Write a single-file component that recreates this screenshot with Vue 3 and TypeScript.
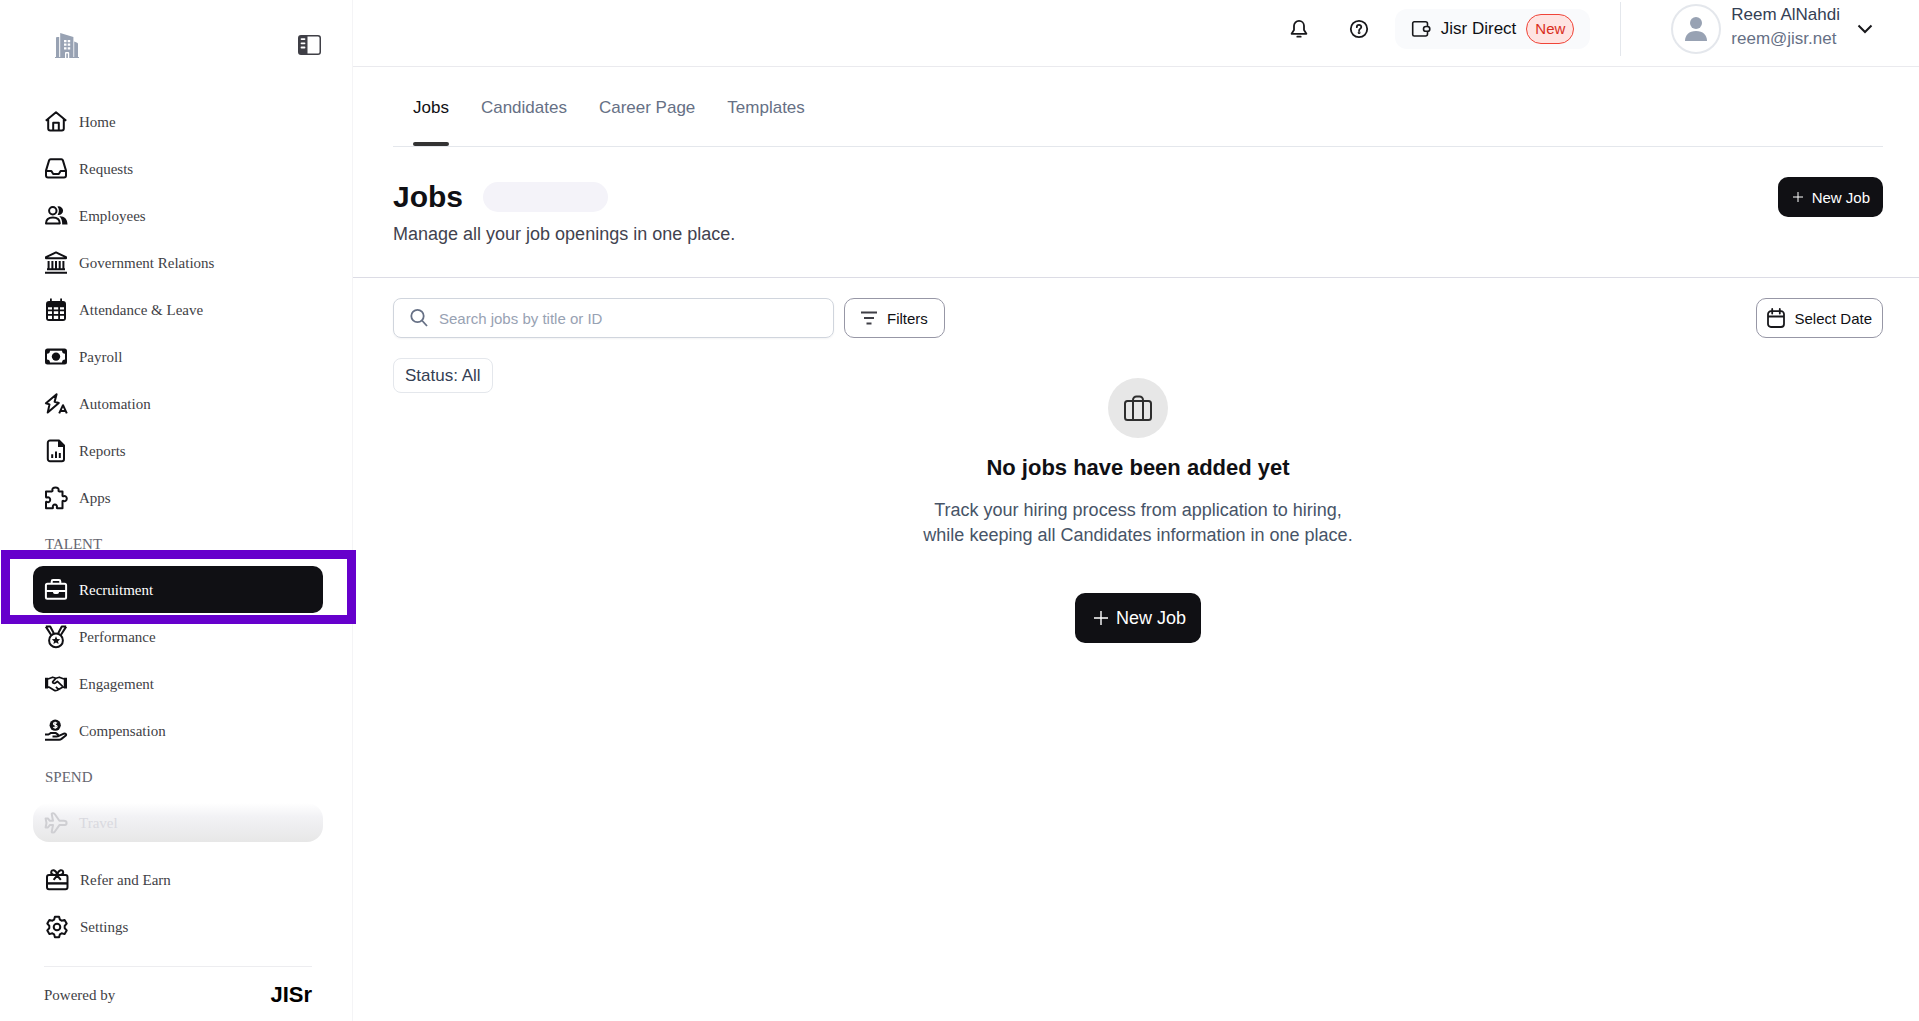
<script setup lang="ts">
import { ref } from 'vue'

interface NavItem {
  label: string
  icon: string
}

const icons: Record<string, string> = {
  home: '<path d="M1.8 10.8 12 2.2l10.2 8.6M4.2 9v9.5a2 2 0 0 0 2 2h11.6a2 2 0 0 0 2-2V9M9.2 20.3v-7.5h5.6v7.5"/>',
  requests:
    '<path d="M6.6 2.3h10.8a1.6 1.6 0 0 1 1.5 1.1L22 13.6v5a2 2 0 0 1-2 2H4a2 2 0 0 1-2-2v-5L5.1 3.4a1.6 1.6 0 0 1 1.5-1.1zM2 14h5.4l1.8 3h5.6l1.8-3H22"/>',
  employees:
    '<circle cx="8.8" cy="6.7" r="3.7"/><path d="M2 19.4c.1-3.8 2.8-5.8 6.9-5.8s6.8 2 6.9 5.8z"/><path fill="currentColor" stroke="none" d="M13.4 2.6a4.3 4.3 0 1 1 .2 8.2c1.8-2.5 1.8-5.700-.2-8.200zM15.300 12.300c4.700-.4 8.100 2.400 8.200 8.100h-5.300c.1-3.400-.8-6.200-2.900-8.100z"/>',
  bank: '<path d="M12 1.400 22 6.200v1H2v-1z"/><path d="M4.600 10v8.500M8.400 10v8.500M12 10v8.500M15.700 10v8.500M19.400 10v8.500M3 18.300h18M1 21.800h22"/>',
  calendar:
    '<path fill="currentColor" stroke="none" fill-rule="evenodd" d="M6 .5h1.800V3h8.400V.5H18V3h1a3 3 0 0 1 3 3v14a3 3 0 0 1-3 3H5a3 3 0 0 1-3-3V6a3 3 0 0 1 3-3h1zM4 9.200v2.300h4V9.200zm5.800 0v2.300h4.400V9.200zm6.200 0v2.300h4V9.200zM4 13.300v2.700h4v-2.700zm5.800 0v2.700h4.400v-2.700zm6.200 0v2.700h4v-2.700zM4 17.800V21h4v-3.200zm5.800 0V21h4.400v-3.200zm6.200 0V21h4v-3.200z"/>',
  cash: '<path fill="currentColor" stroke="none" fill-rule="evenodd" d="M3.500 3.600h17A2.500 2.500 0 0 1 23 6.100v11a2.500 2.500 0 0 1-2.500 2.500h-17A2.500 2.500 0 0 1 1 17.100v-11a2.500 2.500 0 0 1 2.500-2.500zM6 5.800a3 3 0 0 1-3 2.900v5.800a3 3 0 0 1 3 2.900h12a3 3 0 0 1 3-2.900V8.700a3 3 0 0 1-3-2.900z"/><circle cx="12" cy="11.600" r="4.200" fill="currentColor" stroke="none"/>',
  automation:
    '<path d="M12.600 2.200 1.900 11.200l3.600 1.200-1.800 8.200L14.800 11l-4.200-1.200z"/><path d="M15.200 21.300 19 13.200l3.800 8.100M16.600 19h4.800"/>',
  reports:
    '<path d="M6 1.500h9l5 5V20a2.200 2.200 0 0 1-2.200 2.200H6A2.200 2.200 0 0 1 3.800 20V3.700A2.200 2.200 0 0 1 6 1.500zM8.200 19v-3.800M12 19v-6.600M15.800 19v-5"/><path fill="currentColor" stroke="none" d="M14 1v7h6.500z"/>',
  apps: '<path d="M2.300 4.800h5.600c.5 0 .8-.5.6-1C7.700 1.800 9.500.9 11.500.9s3.700 1 3 2.900c-.2.500.1 1 .6 1h3.400v4.300c0 .5.500.8 1 .6 1.700-.8 3.300.6 3.300 2.300s-1.600 3.100-3.300 2.300c-.5-.2-1 .1-1 .6v6.800h-5.200c-.5 0-.5-.5-.4-1 .4-1.800-.6-2.700-2-2.700s-2.400.9-2 2.700c.1.500.1 1-.4 1H2v-6c0-.5.500-.7 1-.4 1.800.9 3.200-.6 3.200-2.100S4.800 10 3 10.900c-.5.200-1 0-1-.5V5z" transform="translate(0 .6)"/>',
  briefcase:
    '<path d="M3.400 5.700h17.200A1.500 1.500 0 0 1 22.100 7.200v12.100a1.500 1.500 0 0 1-1.500 1.500H3.400a1.500 1.500 0 0 1-1.500-1.500V7.200a1.500 1.500 0 0 1 1.500-1.500zM7.700 5.500V3.400a1.300 1.300 0 0 1 1.300-1.300h6a1.300 1.300 0 0 1 1.300 1.300v2.100M2 12.900h20"/><path fill="currentColor" stroke="none" d="M9 13h6v1.200a1.800 1.800 0 0 1-1.800 1.800h-2.400A1.800 1.800 0 0 1 9 14.200z"/>',
  medal:
    '<circle cx="12" cy="15.400" r="6.900"/><path d="M1.800 1.600h4.400l3.600 6.600M1.800 1.600l5.200 8.200M22.200 1.600h-4.400l-3.600 6.600M22.200 1.600 17 9.800"/><path fill="currentColor" stroke="none" d="m12 11.200 1.200 2.700 3 .3-2.200 2 .6 2.900-2.600-1.500-2.600 1.500.6-2.900-2.200-2 3-.3z"/>',
  handshake:
    '<path fill="currentColor" stroke="none" d="M1 5.800h3.200v10.600H1zM19.800 5.800H23v10.600h-3.200z"/><path stroke-width="1.700" d="M4 7l4.700-1.800 3.300 1 3.300-1L20 7M4 15.200h1.200l5 3c1 .6 2.300.3 3 0l5.300-3H20M12 6.200 8.800 9.600c-.7.900 1 2.700 3.200.9l1.400-1.100 5.200 4.900M14.500 17.400l-2.600-2.500"/>',
  coinHand:
    '<circle cx="11.200" cy="6.200" r="5.600" fill="currentColor" stroke="none"/><path d="M13 4.300c-1.100-1-3.500-.8-3.500.6 0 1.700 3.600.9 3.600 2.700 0 1.500-2.700 1.500-3.800.5M11.200 2.700v7" stroke="#fff" stroke-width="1.200"/><path d="M1 15.500h3.500l2.500-1.600h4.500l2.200 1.500c1 .8.5 2-.7 2H8.500M13.800 17.400l6-2.700c1.600-.6 3 .8 2 1.800l-4.300 3.400a4 4 0 0 1-2.300.8H1"/>',
  plane:
    '<path d="M22.600 11.900c0-1.500-1.500-2.100-3-2.100h-4.200L10.700 3c-.5-.9-2.900-1.200-3-.1l1.300 6.900H5.800L3.900 7.400H1.600L2.500 12l-.9 4.500h2.300l1.900-2.400H9l-1.300 6.800c.1 1.100 2.500.8 3-.1l4.700-6.700h4.200c1.500 0 3-.7 3-2.200z"/>',
  gift: '<rect x="2" y="7" width="20.500" height="14.200" rx="2"/><path d="M2 15.400h20.500" stroke-width="2.400"/><path d="M12.200 7C10 7 6 7.200 6.200 4.300 6.400 1.200 11 1 12.200 7zM12.200 7c2.200 0 6.200.2 6-2.700C18 1.200 13.400 1 12.200 7zM8.600 11.900 12.200 7.500l3.600 4.400"/>',
  gear: '<path d="M9.900 1.700h4.200l.8 3 1.700 1 3-.8 2.100 3.600-2 2.300v2.400l2 2.300-2.100 3.600-3-.8-1.700 1-.8 3H9.900l-.8-3-1.700-1-3 .8-2.100-3.600 2-2.300v-2.400l-2-2.300 2.100-3.600 3 .8 1.700-1z"/><circle cx="12" cy="12" r="3.300"/>',
}

const mainItems: NavItem[] = [
  { label: 'Home', icon: 'home' },
  { label: 'Requests', icon: 'requests' },
  { label: 'Employees', icon: 'employees' },
  { label: 'Government Relations', icon: 'bank' },
  { label: 'Attendance & Leave', icon: 'calendar' },
  { label: 'Payroll', icon: 'cash' },
  { label: 'Automation', icon: 'automation' },
  { label: 'Reports', icon: 'reports' },
  { label: 'Apps', icon: 'apps' },
]
const talentItems: NavItem[] = [
  { label: 'Recruitment', icon: 'briefcase' },
  { label: 'Performance', icon: 'medal' },
  { label: 'Engagement', icon: 'handshake' },
  { label: 'Compensation', icon: 'coinHand' },
]
const footerItems: NavItem[] = [
  { label: 'Refer and Earn', icon: 'gift' },
  { label: 'Settings', icon: 'gear' },
]
const tabs = ['Jobs', 'Candidates', 'Career Page', 'Templates']

const activeItem = ref('Recruitment')
const activeTab = ref('Jobs')
const query = ref('')
</script>

<template>
  <div class="layout">
    <aside class="sidebar">
      <div class="brand">
        <svg class="company" viewBox="0 0 24 25" aria-hidden="true">
          <path
            fill="#98a2b3"
            fill-rule="evenodd"
            d="M0 24h1V5a1 1 0 0 1 1-1h2.200v20h1V0l13.200 4v20h.8V8.500l3 1.200c.6.200.8.600.8 1.200V24h1v1H0zM9 7v2.200h2.500V7zm3.700 0v2.200h2.500V7zM9 10.600v2.200h2.500v-2.200zm3.700 0v2.200h2.500v-2.200zM9 14.200v2.200h2.500v-2.200zm3.700 0v2.200h2.500v-2.200zM10 25v-5a1 1 0 0 1 1-1h2.200a1 1 0 0 1 1 1v5h-1.300v-4.600h-1.600V25z"
          />
        </svg>
        <button class="icon-button" type="button" aria-label="Collapse sidebar">
          <svg width="24" height="20" viewBox="0 0 24 20">
            <path
              fill="#3f3f46"
              fill-rule="evenodd"
              d="M3 0h17a3 3 0 0 1 3 3v14a3 3 0 0 1-3 3H3a3 3 0 0 1-3-3V3a3 3 0 0 1 3-3zm6.500 1.500v17H20a1.500 1.500 0 0 0 1.500-1.500V3A1.500 1.500 0 0 0 20 1.500zM3.500 3.200a.9.900 0 0 0 0 1.800h3a.9.900 0 0 0 0-1.800zm0 4.200a.9.900 0 0 0 0 1.800h3a.9.900 0 0 0 0-1.800zm0 4.200a.9.900 0 0 0 0 1.800h3a.9.900 0 0 0 0-1.800z"
            />
          </svg>
        </button>
      </div>

      <nav class="nav" aria-label="Main">
        <a v-for="item in mainItems" :key="item.label" class="nav-item" href="#">
          <svg class="nav-icon" viewBox="0 0 24 24" v-html="icons[item.icon]"></svg>
          <span>{{ item.label }}</span>
        </a>
        <div class="section">TALENT</div>
        <a
          v-for="item in talentItems"
          :key="item.label"
          class="nav-item"
          :class="{ active: item.label === activeItem }"
          href="#"
          @click.prevent="activeItem = item.label"
        >
          <svg class="nav-icon" viewBox="0 0 24 24" v-html="icons[item.icon]"></svg>
          <span>{{ item.label }}</span>
        </a>
        <div class="section">SPEND</div>
        <a class="nav-item faded" href="#">
          <svg class="nav-icon" viewBox="0 0 24 24" v-html="icons.plane"></svg>
          <span>Travel</span>
        </a>
      </nav>

      <nav class="nav secondary" aria-label="Account">
        <a v-for="item in footerItems" :key="item.label" class="nav-item" href="#">
          <svg class="nav-icon" viewBox="0 0 24 24" v-html="icons[item.icon]"></svg>
          <span>{{ item.label }}</span>
        </a>
      </nav>
      <div class="powered">
        <span>Powered by</span>
        <strong class="wordmark">JISr</strong>
      </div>
    </aside>

    <div class="page">
      <header class="topbar">
        <button class="icon-button" type="button" aria-label="Notifications">
          <svg class="line" width="20" height="20" viewBox="0 0 20 20">
            <path d="M10 1.800a5 5 0 0 1 5 5v4.200l2.400 3.800H2.600L5 11V6.800a5 5 0 0 1 5-5zM8.300 17.700h3.400" />
          </svg>
        </button>
        <button class="icon-button" type="button" aria-label="Help">
          <svg class="line" width="20" height="20" viewBox="0 0 20 20">
            <circle cx="10" cy="10" r="8.200" />
            <path d="M7.800 8.200c0-3 4.500-2.900 4.500-.2 0 1.600-2.200 1.600-2.200 3.500" />
            <circle cx="10.100" cy="13.700" r=".5" />
          </svg>
        </button>
        <button class="direct" type="button">
          <svg class="line" width="20" height="20" viewBox="0 0 20 20">
            <path d="M16.500 6.500V4.800a2 2 0 0 0-2-2H3.200a1.500 1.500 0 0 0-1.500 1.500v11.200A1.500 1.500 0 0 0 3.200 17h11.300a2 2 0 0 0 2-2v-2M3 2.800h10" />
            <rect x="12.500" y="7.500" width="6.300" height="4.800" rx="2.400" />
          </svg>
          <span>Jisr Direct</span>
          <span class="badge">New</span>
        </button>
        <button class="account" type="button">
          <span class="avatar">
            <svg width="24" height="26" viewBox="0 0 24 26">
              <circle cx="12" cy="7" r="6" fill="#98a2b3" />
              <path fill="#98a2b3" d="M1 25c0-6 4-10 11-10s11 4 11 10z" />
            </svg>
          </span>
          <span class="who">
            <span class="name">Reem AlNahdi</span>
            <span class="mail">reem@jisr.net</span>
          </span>
          <svg class="chevron" width="16" height="10" viewBox="0 0 16 10">
            <path d="m1.500 1.500 6.500 6.500 6.500-6.500" />
          </svg>
        </button>
      </header>

      <main>
        <section class="intro">
          <nav class="tabs" aria-label="Recruitment sections">
            <a
              v-for="tab in tabs"
              :key="tab"
              class="tab"
              :class="{ current: tab === activeTab }"
              href="#"
              @click.prevent="activeTab = tab"
              >{{ tab }}</a
            >
          </nav>
          <div class="heading">
            <div>
              <div class="title-row">
                <h1>Jobs</h1>
                <span class="pill"></span>
              </div>
              <p class="subtitle">Manage all your job openings in one place.</p>
            </div>
            <button class="primary" type="button">
              <svg class="plus thin" width="12" height="12" viewBox="0 0 12 12"><path d="M6 1v10M1 6h10" /></svg>
              New Job
            </button>
          </div>
        </section>

        <section class="content">
          <div class="toolbar">
            <div class="search">
              <svg width="20" height="20" viewBox="0 0 20 20">
                <circle cx="8.500" cy="8" r="6.200" />
                <path d="m13 12.500 5 5.500" />
              </svg>
              <input v-model="query" type="text" placeholder="Search jobs by title or ID" aria-label="Search jobs by title or ID" />
            </div>
            <button class="outline" type="button">
              <svg width="16" height="14" viewBox="0 0 16 14"><path d="M0 1.500h16M3 7h10M5.500 12.500h5" stroke="#3f3f46" stroke-width="2" /></svg>
              Filters
            </button>
            <button class="outline date" type="button">
              <svg class="line" width="18" height="20" viewBox="0 0 18 20">
                <path d="M4 3.200h10a3 3 0 0 1 3 3V16a3 3 0 0 1-3 3H4a3 3 0 0 1-3-3V6.200a3 3 0 0 1 3-3zM1 8.500h16M5.200 1v4.500M12.800 1v4.500" />
              </svg>
              Select Date
            </button>
          </div>

          <div class="results">
            <button class="chip" type="button">Status: All</button>
            <div class="empty">
              <span class="empty-icon">
                <svg width="28" height="26" viewBox="0 0 28 26">
                  <rect x="1" y="6" width="26" height="19" rx="2.500" />
                  <path d="M9 25V5a3.500 3.500 0 0 1 3.500-3.500h3A3.500 3.500 0 0 1 19 5v20" />
                </svg>
              </span>
              <h2>No jobs have been added yet</h2>
              <p>
                Track your hiring process from application to hiring,<br />
                while keeping all Candidates information in one place.
              </p>
              <button class="primary large" type="button">
                <svg class="plus" width="14" height="14" viewBox="0 0 14 14"><path d="M7 0v14M0 7h14" /></svg>
                New Job
              </button>
            </div>
          </div>
        </section>
      </main>
    </div>
  </div>
</template>

<style>
body {
  background: #fff;
}
</style>

<style scoped>
.layout {
  display: flex;
  min-height: 100vh;
  font-family: 'Liberation Sans', Arial, sans-serif;
  font-size: 18px;
  color: #101014;
}
.layout * {
  box-sizing: border-box;
}
button {
  font: inherit;
  color: inherit;
  cursor: pointer;
}
a {
  text-decoration: none;
}
svg {
  flex: none;
  fill: none;
}

/* Sidebar */
.sidebar {
  flex: none;
  display: flex;
  flex-direction: column;
  width: 353px;
  padding: 0 29px 0 33px;
  border-right: 1px solid #f4f4f6;
  font-family: 'Liberation Serif', 'Times New Roman', serif;
  font-size: 15px;
  line-height: 20px;
  color: #3f3f46;
}
.brand {
  display: flex;
  align-items: center;
  justify-content: space-between;
  height: 98px;
  padding: 0 1px 8px 22px;
}
.company {
  width: 24px;
  height: 25px;
}
.icon-button {
  display: flex;
  padding: 0;
  border: 0;
  background: none;
}
.nav {
  display: flex;
  flex-direction: column;
}
.nav-item {
  position: relative;
  display: flex;
  align-items: center;
  gap: 11px;
  height: 47px;
  padding: 0 11px;
  border-radius: 10px;
  color: #3f3f46;
}
.nav-icon {
  width: 24px;
  height: 24px;
  color: #101014;
  stroke: currentColor;
  stroke-width: 2;
  stroke-linejoin: round;
}
.nav-item.active,
.nav-item.active .nav-icon {
  color: #fff;
}
.nav-item.active {
  background: #101014;
}
.nav-item.active::after {
  content: '';
  position: absolute;
  inset: -16px -33px -11px -32px;
  border: 9px solid #6600cc;
  pointer-events: none;
}
.nav-item.faded {
  height: 39px;
  margin-top: 4px;
  border-radius: 16px;
  background: linear-gradient(#fff, #f2f2f5 35%, #e7e7e7);
  color: #d9d9df;
}
.nav-item.faded .nav-icon {
  color: #cfcfd3;
}
.section {
  height: 45px;
  padding: 13px 12px 0;
  color: #65656f;
}
.secondary {
  padding: 14px 1px 16px;
}
.powered {
  display: flex;
  align-items: center;
  justify-content: space-between;
  height: 55px;
  margin: 0 11px;
  padding-top: 2px;
  border-top: 1px solid #ededf0;
}
.wordmark {
  font-family: 'Liberation Sans', Arial, sans-serif;
  font-size: 22px;
  color: #000;
}

/* Top bar */
.page {
  flex: 1;
  min-width: 0;
}
.topbar {
  display: flex;
  align-items: center;
  justify-content: flex-end;
  height: 67px;
  padding: 0 46px 9px 0;
  border-bottom: 1px solid #eaeaee;
}
.topbar > .icon-button {
  margin-right: 40px;
}
.line {
  stroke: #18181b;
  stroke-width: 1.8;
  stroke-linejoin: round;
  stroke-linecap: round;
}
.topbar > .direct {
  display: flex;
  align-items: center;
  gap: 10px;
  height: 40px;
  margin-left: -14px;
  padding: 0 16px;
  border: 0;
  border-radius: 12px;
  background: #f9fafc;
  font-size: 17px;
}
.topbar > .direct svg {
  stroke-width: 1.6;
}
.badge {
  height: 30px;
  padding: 0 8px;
  border: 1px solid #f04438;
  border-radius: 15px;
  background: #fee4e2;
  font-size: 15px;
  line-height: 28px;
  color: #d92d20;
}
.account {
  display: flex;
  align-items: center;
  height: 54px;
  margin-left: 30px;
  padding: 0 0 0 50px;
  border: 0;
  border-left: 1px solid #e4e7ec;
  background: none;
  text-align: left;
}
.avatar {
  display: flex;
  align-items: center;
  justify-content: center;
  width: 50px;
  height: 50px;
  border: 2px solid #e4e7ec;
  border-radius: 50%;
}
.who {
  display: flex;
  flex-direction: column;
  margin: 0 17px 4px 10px;
  font-size: 17px;
  line-height: 24px;
}
.name {
  color: #344054;
}
.mail {
  color: #667085;
}
.chevron {
  stroke: #18181b;
  stroke-width: 2;
}

/* Page heading */
.intro {
  padding: 0 36px 0 40px;
  border-bottom: 1px solid #dcdce5;
}
.tabs {
  display: flex;
  gap: 32px;
  height: 80px;
  padding: 0 20px;
  border-bottom: 1px solid #e4e7ec;
  font-size: 17px;
}
.tab {
  display: flex;
  flex-direction: column;
  justify-content: space-between;
  color: #667085;
}
.tab::before {
  content: '';
  height: 7px;
}
.tab::after {
  content: '';
  height: 4px;
  border-radius: 2px;
}
.tab.current {
  color: #101014;
}
.tab.current::after {
  background: #333;
}
.heading {
  display: flex;
  align-items: flex-start;
  justify-content: space-between;
  padding: 30px 0;
}
.title-row {
  display: flex;
  align-items: center;
  gap: 20px;
  margin-top: 1px;
}
h1 {
  margin: 0;
  font-size: 30px;
  line-height: 38px;
}
.pill {
  width: 125px;
  height: 30px;
  border-radius: 15px;
  background: #f4f3f9;
}
.subtitle {
  margin: 6px 0 0;
  line-height: 25px;
  color: #42424e;
}
.primary {
  display: flex;
  align-items: center;
  gap: 8px;
  height: 40px;
  padding: 0 13px 0 14px;
  border: 0;
  border-radius: 10px;
  background: #101014;
  font-size: 15px;
  color: #fff;
}
.primary.large {
  height: 50px;
  padding: 0 15px 0 19px;
  font-size: 18px;
}
.plus {
  stroke: #fff;
  stroke-width: 1.4;
}
.plus.thin {
  stroke-width: 1;
}

/* Toolbar and results */
.content {
  padding: 20px 36px 20px 40px;
}
.toolbar {
  display: flex;
  gap: 10px;
}
.search {
  display: flex;
  align-items: center;
  gap: 10px;
  width: 441px;
  height: 40px;
  padding: 0 15px;
  border: 1px solid #d0d5dd;
  border-radius: 8px;
  box-shadow: 0 1px 2px #1018280d;
}
.search svg {
  stroke: #667085;
  stroke-width: 1.8;
}
.search input {
  flex: 1;
  min-width: 0;
  padding: 0;
  border: 0;
  outline: 0;
  background: none;
  font: inherit;
  font-size: 15px;
}
.search input::placeholder {
  color: #98a2b3;
  opacity: 1;
}
.outline {
  display: flex;
  align-items: center;
  gap: 10px;
  height: 40px;
  padding: 0 16px;
  border: 1px solid #9797a6;
  border-radius: 10px;
  background: #fff;
  font-size: 15px;
}
.outline.date {
  gap: 9px;
  margin-left: auto;
  padding: 0 10px;
}
.results {
  display: grid;
  margin-top: 20px;
}
.results > * {
  grid-area: 1 / 1;
}
.chip {
  align-self: start;
  justify-self: start;
  height: 35px;
  padding: 0 11px;
  border: 1px solid #e4e7ec;
  border-radius: 8px;
  background: #fff;
  font-size: 17px;
  color: #344054;
}
.empty {
  display: flex;
  flex-direction: column;
  align-items: center;
  justify-self: center;
  padding-top: 20px;
  text-align: center;
}
.empty-icon {
  display: flex;
  align-items: center;
  justify-content: center;
  width: 60px;
  height: 60px;
  border-radius: 50%;
  background: #e7e7e7;
}
.empty-icon svg {
  stroke: #2e2e2e;
  stroke-width: 2;
}
h2 {
  margin: 15px 0 0;
  font-size: 22px;
  line-height: 30px;
}
.empty p {
  margin: 15px 0 45px;
  line-height: 25px;
  color: #475467;
}
</style>
